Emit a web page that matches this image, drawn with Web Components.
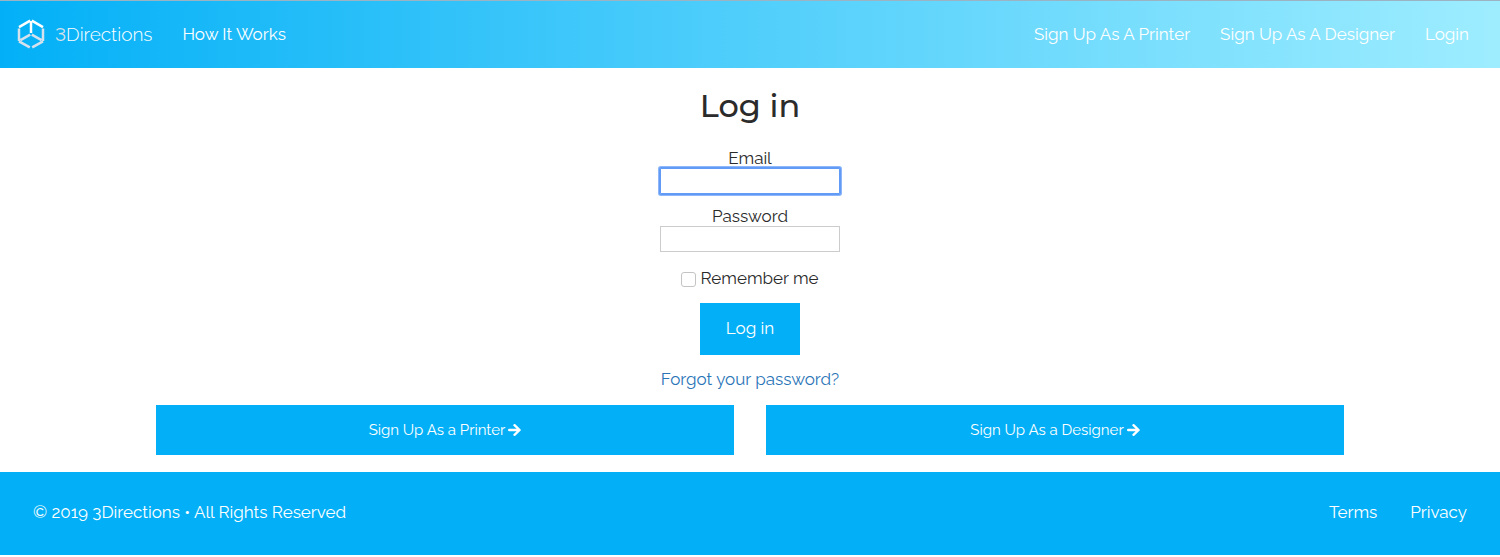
<!DOCTYPE html>
<html lang="en">
<head>
<meta charset="utf-8">
<meta name="viewport" content="width=device-width, initial-scale=1">
<title>3Directions - Log in</title>
<style>
  html { --brand: #03b0f7; --ink: #2b2b2b; }
  body { margin: 0; background: #fff; color: var(--ink); font: 17px/24px Raleway, Lato, sans-serif; }
</style>
</head>
<body>
<login-page></login-page>

<template id="site-header">
  <style>
    :host { display: block; border-top: 1px solid #9bb3c2; background: linear-gradient(90deg, #03b0f7, #9eedff); color: #fff; }
    nav { display: flex; align-items: center; min-height: 67px; padding: 0 31px 2px 17px; box-sizing: border-box; }
    .start, .end { display: flex; align-items: center; gap: 30px; }
    .end { margin-left: auto; }
    a { color: inherit; text-decoration: none; }
    .brand { display: flex; align-items: center; gap: 10px; font: 300 19px/24px Raleway, Lato, sans-serif; font-variant-numeric: lining-nums; }
    svg { display: block; width: 28px; height: 30px; }
    .three { color: #d5e0ea; font-weight: 400; }
  </style>
  <nav aria-label="Main">
    <div class="start">
      <a class="brand" href="#">
        <svg viewBox="0 0 28 30" fill="none" stroke-width="2.500" aria-hidden="true">
          <path d="M2 8.200 13.200 1.700M14.800 1.700 26 8.200M14 2V14" stroke="#fff"/>
          <path d="M2 9.500V22M26 9.500V22M2 22.300 12.800 28.400M15.200 28.400 26 22.300M13.200 15.700 3.500 21.200M14.800 15.700 24.500 21.200" stroke="#d5e2ee"/>
        </svg>
        <span><span class="three">3</span>Directions</span>
      </a>
      <a href="#">How It Works</a>
    </div>
    <div class="end">
      <a href="#">Sign Up As A Printer</a>
      <a href="#">Sign Up As A Designer</a>
      <a href="#">Login</a>
    </div>
  </nav>
</template>

<template id="text-field">
  <style>
    :host { display: flex; flex-direction: column; align-items: center; }
    label { line-height: 20px; }
    input { box-sizing: border-box; width: 180px; height: 26px; margin: 0; padding: 2px 6px; border: 1px solid #ccc; border-radius: 0; background: #fff; color: inherit; font: inherit; outline: none; }
    :host([active]) input { border-color: #629bf6; border-radius: 1px; box-shadow: 0 0 0 1px #629bf6, 0 0 0 2px #8db7fa; }
  </style>
  <label for="field"><slot></slot></label>
  <input id="field">
</template>

<template id="login-form">
  <style>
    :host { display: block; }
    form { display: flex; flex-direction: column; align-items: center; }
    h1 { margin: 0 0 22px; font: 500 32px/40px Montserrat, Inter, sans-serif; }
    text-field { margin-bottom: 12px; }
    .remember { display: flex; align-items: center; gap: 4px; margin: 2px 0 13px; }
    input { appearance: none; box-sizing: border-box; width: 15px; height: 15px; margin: 2px 0 0; border: 1px solid #c4c4c4; border-radius: 3px; background: #fff; }
    input:checked { background: var(--brand); }
    button { min-width: 100px; height: 52px; padding: 0 0 2px; border: 0; background: var(--brand); color: #fff; font: inherit; cursor: pointer; }
    a { margin-top: 12px; color: #2a75b8; text-decoration: none; }
  </style>
  <form>
    <h1>Log in</h1>
    <text-field type="email" active>Email</text-field>
    <text-field type="password">Password</text-field>
    <div class="remember"><input type="checkbox" id="remember"><label for="remember">Remember me</label></div>
    <button type="submit">Log in</button>
    <a href="#">Forgot your password?</a>
  </form>
</template>

<template id="signup-link">
  <style>
    :host { display: block; }
    a { display: flex; justify-content: center; align-items: center; gap: 3px; height: 50px; background: var(--brand); color: #fff; font-size: 15px; text-decoration: none; }
    svg { width: 13px; height: 13px; }
  </style>
  <a href="#"><slot></slot>
    <svg viewBox="0 0 13 13" fill="none" stroke="#fff" stroke-width="2.400" stroke-linecap="round" stroke-linejoin="round" aria-hidden="true"><path d="M1.200 6H11M6.500 1.200 11.600 6 6.500 10.800"/></svg>
  </a>
</template>

<template id="site-footer">
  <style>
    :host { display: flex; justify-content: space-between; align-items: center; min-height: 80px; padding: 0 33px 3px; background: var(--brand); color: #fff; }
    nav { display: flex; gap: 33px; }
    a { color: inherit; text-decoration: none; }
  </style>
  <span>© 2019 3Directions • All Rights Reserved</span>
  <nav aria-label="Legal"><a href="#">Terms</a><a href="#">Privacy</a></nav>
</template>

<template id="login-page">
  <style>
    :host { display: block; }
    main { padding: 18px 16px 17px; }
    .signup { display: grid; grid-template-columns: 1fr 1fr; gap: 32px; max-width: 1188px; margin: 14px auto 0; }
  </style>
  <site-header></site-header>
  <main>
    <login-form></login-form>
    <div class="signup">
      <signup-link>Sign Up As a Printer</signup-link>
      <signup-link>Sign Up As a Designer</signup-link>
    </div>
  </main>
  <site-footer></site-footer>
</template>

<script>
  class TemplateElement extends HTMLElement {
    constructor() {
      super();
      const template = document.getElementById(this.localName);
      this.attachShadow({ mode: "open" }).append(template.content.cloneNode(true));
    }
  }
  class SiteHeader extends TemplateElement {}
  class SiteFooter extends TemplateElement {}
  class SignupLink extends TemplateElement {}
  class LoginForm extends TemplateElement {}
  class LoginPage extends TemplateElement {}
  class TextField extends TemplateElement {
    connectedCallback() {
      this.shadowRoot.querySelector("input").type = this.getAttribute("type") || "text";
    }
  }
  customElements.define("site-header", SiteHeader);
  customElements.define("site-footer", SiteFooter);
  customElements.define("signup-link", SignupLink);
  customElements.define("text-field", TextField);
  customElements.define("login-form", LoginForm);
  customElements.define("login-page", LoginPage);
</script>
</body>
</html>
